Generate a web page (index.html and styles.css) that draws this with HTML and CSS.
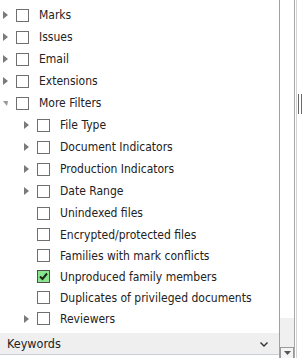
FILE: index.html
```html
<!DOCTYPE html>
<html lang="en">
<head>
    <meta charset="UTF-8">
    <title>Filters</title>
    <link rel="stylesheet" href="styles.css">
</head>
<body>
    <div class="frame">
        <div class="panel">
            <ul class="tree">
                <li class="row"><span class="arrow"></span><span class="check"></span><span class="label">Marks</span></li>
                <li class="row"><span class="arrow"></span><span class="check"></span><span class="label">Issues</span></li>
                <li class="row"><span class="arrow"></span><span class="check"></span><span class="label">Email</span></li>
                <li class="row"><span class="arrow"></span><span class="check"></span><span class="label">Extensions</span></li>
                <li class="row"><span class="arrow open"></span><span class="check"></span><span class="label">More Filters</span></li>
                <li class="row sub"><span class="arrow"></span><span class="check"></span><span class="label">File Type</span></li>
                <li class="row sub"><span class="arrow"></span><span class="check"></span><span class="label">Document Indicators</span></li>
                <li class="row sub"><span class="arrow"></span><span class="check"></span><span class="label">Production Indicators</span></li>
                <li class="row sub"><span class="arrow"></span><span class="check"></span><span class="label">Date Range</span></li>
                <li class="row sub"><span class="arrow none"></span><span class="check"></span><span class="label">Unindexed files</span></li>
                <li class="row sub tight"><span class="arrow none"></span><span class="check"></span><span class="label">Encrypted/protected files</span></li>
                <li class="row sub tight"><span class="arrow none"></span><span class="check"></span><span class="label">Families with mark conflicts</span></li>
                <li class="row sub tight"><span class="arrow none"></span><span class="check checked"><svg width="11" height="11" viewBox="0 0 11 11"><path d="M2 5.5 L4.5 8 L9 2.5" fill="none" stroke="#1c2a1c" stroke-width="2"/></svg></span><span class="label">Unproduced family members</span></li>
                <li class="row sub tight"><span class="arrow none"></span><span class="check"></span><span class="label">Duplicates of privileged documents</span></li>
                <li class="row sub tight"><span class="arrow"></span><span class="check"></span><span class="label">Reviewers</span></li>
            </ul>
            <div class="section">
                <span>Keywords</span>
                <svg class="chevron" width="8" height="5" viewBox="0 0 8 5"><path d="M0.5 0.5 L4 4 L7.5 0.5" fill="none" stroke="#333" stroke-width="1.4"/></svg>
            </div>
        </div>
        <div class="gutter">
            <div class="gutter-fill"></div>
            <div class="down-btn"><svg width="7" height="4" viewBox="0 0 7 4"><path d="M0 0 L7 0 L3.5 4 Z" fill="#555"/></svg></div>
        </div>
        <div class="scrollbar">
            <div class="grip"></div>
        </div>
    </div>
</body>
</html>
```

FILE: styles.css
```css
body {
    margin: 0;
    background: #fff;
    font-family: "DejaVu Sans Condensed", "DejaVu Sans", sans-serif;
    font-stretch: condensed;
    font-size: 12px;
    color: #222;
}
.frame {
    display: flex;
    width: 303px;
    height: 358px;
    overflow: hidden;
}
.panel {
    width: 279px;
    flex-shrink: 0;
    border-right: 1px solid #a0a0a0;
    display: flex;
    flex-direction: column;
}
.tree {
    list-style: none;
    margin: 0;
    padding: 4px 0 0 0;
}
.row {
    height: 22px;
    display: flex;
    align-items: center;
    padding-left: 3px;
}
.row.sub {
    padding-left: 24px;
}
.row.tight {
    height: 21px;
}
.arrow {
    width: 0;
    height: 0;
    border-top: 4px solid transparent;
    border-bottom: 4px solid transparent;
    border-left: 5px solid #7a7a7a;
    margin-right: 8px;
}
.arrow.open {
    border-left: 4px solid transparent;
    border-right: 1px solid transparent;
    border-top: 5px solid #999;
    border-bottom: 0;
    margin-top: 1px;
}
.arrow.none {
    border-color: transparent;
}
.check {
    width: 13px;
    height: 13px;
    box-sizing: border-box;
    border: 1px solid #6f6f6f;
    background: #fff;
    display: flex;
    align-items: center;
    justify-content: center;
}
.check.checked {
    background: #88e68c;
    border-color: #4f4f4f;
}
.label {
    margin-left: 10px;
    white-space: nowrap;
}
.section {
    margin-top: 4px;
    height: 21px;
    background: #efefef;
    border-bottom: 1px solid #c9ced6;
    display: flex;
    align-items: center;
    justify-content: space-between;
    padding: 0 11px 0 7px;
    font-size: 12.5px;
}
.chevron {
    margin-top: 2px;
}
.gutter {
    width: 14px;
    flex-shrink: 0;
    border-right: 1px solid #a8a8a8;
    display: flex;
    flex-direction: column;
}
.gutter-fill {
    flex: 1;
    background: linear-gradient(#fff 318px, #f0f0f0 318px);
}
.down-btn {
    height: 10px;
    border: 1px solid #9a9a9a;
    border-bottom: 0;
    background: #f4f4f4;
    display: flex;
    align-items: center;
    justify-content: center;
}
.scrollbar {
    width: 8px;
    flex-shrink: 0;
    box-sizing: border-box;
    margin-left: 1px;
    border-left: 1px solid #d4d4d4;
    border-right: 1px solid #d4d4d4;
}
.grip {
    margin: 94px 0 0 1px;
    width: 4px;
    height: 20px;
    box-sizing: border-box;
    border-left: 1px solid #6a6a6a;
    border-right: 1px solid #6a6a6a;
}
```
